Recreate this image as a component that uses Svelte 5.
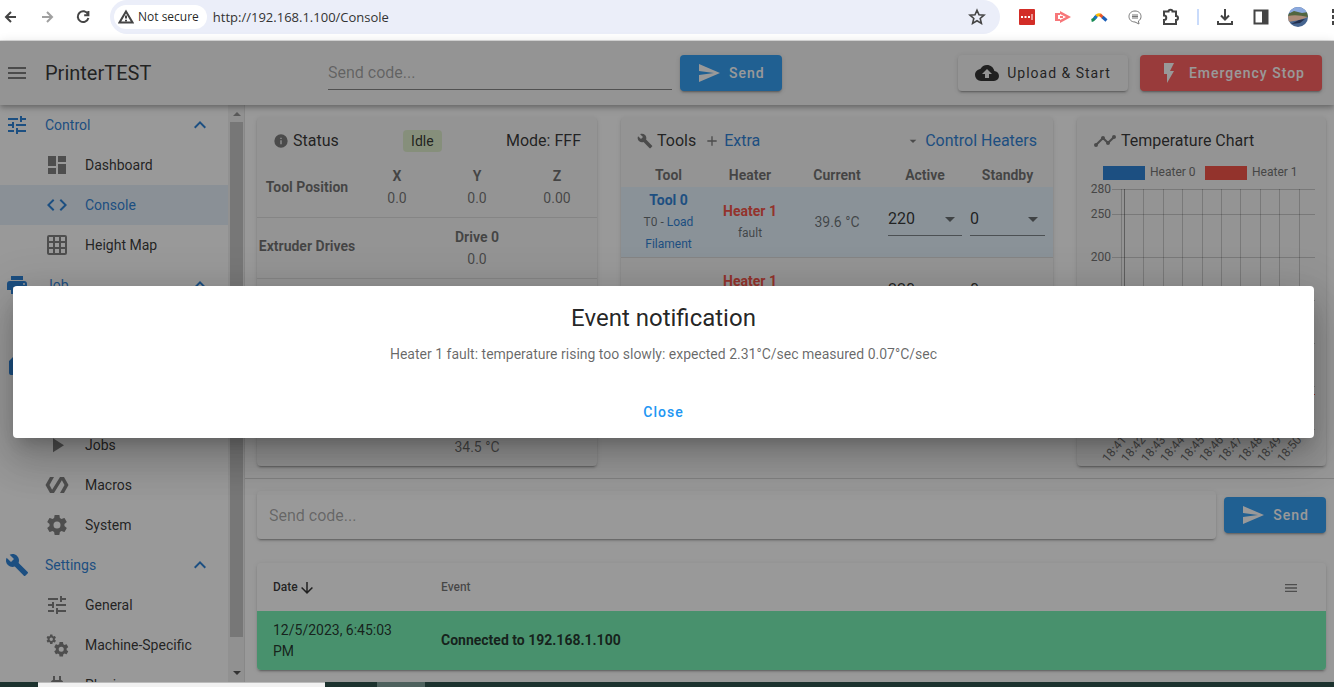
<script>
const icons = {
  menu: 'M3,6H21V8H3V6M3,11H21V13H3V11M3,16H21V18H3V16Z',
  tune: 'M3,17V19H9V17H3M3,5V7H13V5H3M13,21V19H21V17H13V15H11V21H13M7,9V11H3V13H7V15H9V9H7M21,13V11H11V13H21M15,9H17V7H21V5H17V3H15V9Z',
  dashboard: 'M13,3V9H21V3M13,21H21V11H13M3,21H11V15H3M3,13H11V3H3V13Z',
  code: 'M14.6,16.6L19.2,12L14.6,7.4L16,6L22,12L16,18L14.6,16.6M9.4,16.6L4.8,12L9.4,7.4L8,6L2,12L8,18L9.4,16.6Z',
  grid: 'M10,4V8H14V4H10M16,4V8H20V4H16M16,10V14H20V10H16M16,16V20H20V16H16M14,20V16H10V20H14M8,20V16H4V20H8M8,14V10H4V14H8M8,8V4H4V8H8M10,14H14V10H10V14M4,2H20A2,2 0 0,1 22,4V20A2,2 0 0,1 20,22H4C2.92,22 2,21.1 2,20V4A2,2 0 0,1 4,2Z',
  printer: 'M18,3H6V7H18M19,12A1,1 0 0,1 18,11A1,1 0 0,1 19,10A1,1 0 0,1 20,11A1,1 0 0,1 19,12M16,19H8V14H16M19,8H5A3,3 0 0,0 2,11V17H6V21H18V17H22V11A3,3 0 0,0 19,8Z',
  sd: 'M18,8H16V4H18M15,8H13V4H15M12,8H10V4H12M18,2H10L4,8V20A2,2 0 0,0 6,22H18A2,2 0 0,0 20,20V4A2,2 0 0,0 18,2Z',
  info: 'M13,9H11V7H13M13,17H11V11H13M12,2A10,10 0 0,0 2,12A10,10 0 0,0 12,22A10,10 0 0,0 22,12A10,10 0 0,0 12,2Z',
  play: 'M8,5.14V19.14L19,12.14L8,5.14Z',
  polymer: 'M19,4H15L7.1,16.63L4.5,12L9,4H5L0.5,12L5,20H9L16.89,7.37L19.5,12L15,20H19L23.5,12L19,4Z',
  cog: 'M12,15.5A3.5,3.5 0 0,1 8.5,12A3.5,3.5 0 0,1 12,8.5A3.5,3.5 0 0,1 15.5,12A3.5,3.5 0 0,1 12,15.5M19.43,12.97C19.47,12.65 19.5,12.33 19.5,12C19.5,11.67 19.47,11.34 19.43,11L21.54,9.37C21.73,9.22 21.78,8.95 21.66,8.73L19.66,5.27C19.54,5.05 19.27,4.96 19.05,5.05L16.56,6.05C16.04,5.66 15.5,5.32 14.87,5.07L14.5,2.42C14.46,2.18 14.25,2 14,2H10C9.75,2 9.54,2.18 9.5,2.42L9.13,5.07C8.5,5.32 7.96,5.66 7.44,6.05L4.95,5.05C4.73,4.96 4.46,5.05 4.34,5.27L2.34,8.73C2.21,8.95 2.27,9.22 2.46,9.37L4.57,11C4.53,11.34 4.5,11.67 4.5,12C4.5,12.33 4.53,12.65 4.57,12.97L2.46,14.63C2.27,14.78 2.21,15.05 2.34,15.27L4.34,18.73C4.46,18.95 4.73,19.03 4.95,18.95L7.44,17.94C7.96,18.34 8.5,18.68 9.13,18.93L9.5,21.58C9.54,21.82 9.75,22 10,22H14C14.25,22 14.46,21.82 14.5,21.58L14.87,18.93C15.5,18.67 16.04,18.34 16.56,17.94L19.05,18.95C19.27,19.03 19.54,18.95 19.66,18.73L21.66,15.27C21.78,15.05 21.73,14.78 21.54,14.63L19.43,12.97Z',
  wrench: 'M22.7,19L13.6,9.9C14.5,7.6 14,4.9 12.1,3C10.1,1 7.1,0.6 4.7,1.7L9,6L6,9L1.6,4.7C0.4,7.1 0.9,10.1 2.9,12.1C4.8,14 7.5,14.5 9.8,13.6L18.9,22.7C19.3,23.1 19.9,23.1 20.3,22.7L22.6,20.4C23.1,20 23.1,19.3 22.7,19Z',
  plug: 'M16,7V3H14V7H10V3H8V7H8C7,7 6,8 6,9V14.5L9.5,18V21H14.5V18L18,14.5V9C18,8 17,7 16,7Z',
  up: 'M7.41,15.41L12,10.83L16.59,15.41L18,14L12,8L6,14L7.41,15.41Z',
  send: 'M2,21L23,12L2,3V10L17,12L2,14V21Z',
  cloud: 'M14,13V17H10V13H7L12,8L17,13M19.35,10.03C18.67,6.59 15.64,4 12,4C9.11,4 6.6,5.64 5.35,8.03C2.34,8.36 0,10.9 0,14A6,6 0 0,0 6,20H19A5,5 0 0,0 24,15C24,12.36 21.95,10.22 19.35,10.03Z',
  flash: 'M7,2V13H10V22L17,10H13L17,2H7Z',
  plus: 'M19,13H13V19H11V13H5V11H11V5H13V11H19V13Z',
  down: 'M7,10L12,15L17,10H7Z',
  chart: 'M23,8C23,9.1 22.1,10 21,10C20.82,10 20.65,9.97 20.5,9.93L16.93,13.5C16.97,13.64 17,13.82 17,14C17,15.1 16.1,16 15,16C13.9,16 13,15.1 13,14C13,13.82 13.03,13.64 13.07,13.5L10.5,10.93C10.36,10.97 10.18,11 10,11C9.82,11 9.64,10.97 9.5,10.93L4.93,15.5C4.97,15.65 5,15.82 5,16A2,2 0 0,1 3,18A2,2 0 0,1 1,16C1,14.9 1.9,14 3,14C3.18,14 3.35,14.03 3.5,14.07L8.07,9.5C8.03,9.36 8,9.18 8,9C8,7.9 8.9,7 10,7C11.1,7 12,7.9 12,9C12,9.18 11.97,9.36 11.93,9.5L14.5,12.07C14.64,12.03 14.82,12 15,12C15.18,12 15.36,12.03 15.5,12.07L19.07,8.5C19.03,8.35 19,8.18 19,8A2,2 0 0,1 21,6A2,2 0 0,1 23,8Z',
  arrow: 'M11,4H13V16L18.5,10.5L19.92,11.92L12,19.84L4.08,11.92L5.5,10.5L11,16V4Z'
};

const menu = [
  { name: 'Control', icon: 'tune', pages: [
    { name: 'Dashboard', icon: 'dashboard' },
    { name: 'Console', icon: 'code' },
    { name: 'Height Map', icon: 'grid' }
  ] },
  { name: 'Job', icon: 'printer', pages: [
    { name: 'Status', icon: 'info' }
  ] },
  { name: 'Files', icon: 'sd', pages: [
    { name: 'Filaments', icon: 'polymer' },
    { name: 'Jobs', icon: 'play' },
    { name: 'Macros', icon: 'polymer' },
    { name: 'System', icon: 'cog' }
  ] },
  { name: 'Settings', icon: 'wrench', pages: [
    { name: 'General', icon: 'tune' },
    { name: 'Machine-Specific', icon: 'cogs' },
    { name: 'Plugins', icon: 'plug' }
  ] }
];

const axes = [
  { name: 'X', value: '0.0' },
  { name: 'Y', value: '0.0' },
  { name: 'Z', value: '0.00' }
];

const tools = [
  { number: 0, heaters: [{ name: 'Heater 1', state: 'fault', current: '39.6 °C' }] },
  { number: 1, heaters: [
    { name: 'Heater 1', state: 'fault', current: '39.6 °C' },
    { name: 'Heater 2', state: 'off', current: '34.5 °C' }
  ] }
];

const yTicks = [280, 250, 200, 150, 100, 50, 0];
const times = ['18:41', '18:42', '18:43', '18:44', '18:45', '18:46', '18:47', '18:48', '18:49', '18:50'];

const tempY = (t) => t === 280 ? 29 : Math.round(269 - t * 43 / 50);
const timeX = (i) => Math.round(47 + i * 19.4);

let active = $state('Console');
let open = $state(true);
</script>

{#snippet icon(name, size = 24)}
  <svg class="icon" width={size} height={size} viewBox="0 0 24 24" aria-hidden="true">
    {#if name === 'cogs'}
      <path d={icons.cog} transform="translate(.5 .5) scale(.48)"/>
      <path d={icons.cog} transform="translate(7.6 7.6) scale(.72)"/>
    {:else}
      <path d={icons[name]}/>
    {/if}
  </svg>
{/snippet}

<div class="window">
  <header class="browser">
    <button aria-label="Back"><svg width="16" height="16" viewBox="0 0 16 16"><path class="line" d="M13 8H3M8 3L3 8l5 5"/></svg></button>
    <button aria-label="Forward" class="off"><svg width="16" height="16" viewBox="0 0 16 16"><path class="line" d="M3 8h10M8 3l5 5l-5 5"/></svg></button>
    <button aria-label="Reload"><svg width="16" height="16" viewBox="0 0 16 16"><path class="line" d="M13 5.2A5.4 5.4 0 1 0 13.4 9M13.4 2v4.2H9.2"/></svg></button>
    <div class="address">
      <span class="secure">
        <svg width="16" height="16" viewBox="0 0 16 16"><path class="line" d="M8 2.5L14.5 13.5H1.5ZM8 6.5v3M8 10.8v1.4"/></svg>
        Not secure
      </span>
      <input aria-label="Address" value="http://192.168.1.100/Console">
      <button aria-label="Bookmark"><svg width="18" height="18" viewBox="0 0 18 18"><path class="line thin" d="M9 2.2l2 4.6l5 .4l-3.8 3.3l1.2 4.9L9 12.8l-4.4 2.6l1.2-4.9L2 7.2l5-.4Z"/></svg></button>
    </div>
    <div class="extensions">
      <svg width="18" height="18" viewBox="0 0 18 18"><rect x="1" y="1" width="16" height="16" rx="1" fill="#d32d27"/><path d="M3 8h2v2H3ZM6.500 8h2v2h-2ZM10 8h2v2h-2ZM13.500 6h1v6h-1Z" fill="#fff"/></svg>
      <svg width="18" height="18" viewBox="0 0 18 18"><path d="M1 5h5v2H4v4h2v2H1ZM6 3l11 6l-11 6v-3l6-3l-6-3ZM6 8h3v2H6Z" fill="#f7777a"/></svg>
      <svg width="18" height="18" viewBox="0 0 18 18" fill="none" stroke-width="3"><path d="M1.500 12.500Q4 12 6 8.500" stroke="#188a55"/><path d="M4.500 10.500L7 7.500" stroke="#1a73c8"/><path d="M6.500 8Q8 6 10.500 7" stroke="#fbbc04"/><path d="M10 6.700L13 9.500" stroke="#e8562a"/><path d="M12.500 9L16.500 12.500" stroke="#1b5fb8"/></svg>
      <svg width="18" height="18" viewBox="0 0 18 18"><path d="M9 3C5.500 3 3 5.300 3 8.500S5.500 14 9 14l4 2l-.6-3C14.200 12 15 10.500 15 8.500C15 5.300 12.500 3 9 3Z" fill="none" stroke="#777"/><path d="M6 7h6M6 8.500h6M6 10h6" stroke="#777"/></svg>
      <svg width="18" height="18" viewBox="0 0 18 18"><path class="line" d="M2 3.500h4.500a2 1.800 0 0 1 4 0H14v4.500a1.800 1.800 0 0 1 0 4V16H2v-4c3 0 3-4.500 0-4.500Z"/></svg>
      <span class="split"></span>
      <svg width="18" height="18" viewBox="0 0 18 18"><path class="line" d="M9 1v10M5 7.500l4 4l4-4M2 13v3h14v-3"/></svg>
      <svg width="18" height="18" viewBox="0 0 18 18"><path class="line" d="M2.500 2.500h13v13h-13Z"/><path d="M10 2h6v14h-6Z" fill="#444"/></svg>
      <svg width="20" height="20" viewBox="0 0 20 20">
        <clipPath id="face"><circle cx="10" cy="10" r="10"/></clipPath>
        <g clip-path="url(#face)"><path d="M0 0h20v20H0Z" fill="#466590"/><path d="M0 0h20v6H0Z" fill="#8ba9de"/><path d="M0 7l6-3l8 2l6-1v5H0Z" fill="#52653f"/><path d="M0 9q8-2 20 1l-8 3l-12 2Z" fill="#ad8b78"/><path d="M3 17l8-4l6-1l-5 4Z" fill="#222f4d"/></g>
      </svg>
    </div>
    <button aria-label="More" class="more"><svg width="4" height="18" viewBox="0 0 4 18"><path d="M0 1h4v4H0ZM0 7h4v4H0ZM0 13h4v4H0Z" fill="#444"/></svg></button>
  </header>

  <div class="app">
    <header class="bar">
      <div class="brand">
        <button class="plain" aria-label="Toggle menu">{@render icon('menu')}</button>
        <h1>PrinterTEST</h1>
      </div>
      <form class="code" onsubmit={(e) => e.preventDefault()}>
        <input aria-label="G-code" placeholder="Send code...">
        <button class="btn blue">{@render icon('send')}Send</button>
      </form>
      <div class="actions">
        <button class="btn">{@render icon('cloud')}Upload &amp; Start</button>
        <button class="btn red">{@render icon('flash')}Emergency Stop</button>
      </div>
    </header>

    <div class="body">
      <aside>
        <nav>
          {#each menu as group}
            <button class="group">
              {@render icon(group.icon)}
              <span>{group.name}</span>
              {@render icon('up')}
            </button>
            {#each group.pages as page}
              <a href="#{page.name}" class:active={active === page.name} onclick={() => active = page.name}>
                {@render icon(page.icon)}
                {page.name}
              </a>
            {/each}
          {/each}
        </nav>
        <div class="scroll" aria-hidden="true">
          <svg width="17" height="17" viewBox="0 0 17 17"><path d="M5 11l4-4l4 4Z" fill="#8a8a8a"/></svg>
          <span class="thumb"></span>
          <svg width="17" height="17" viewBox="0 0 17 17"><path d="M5 6l4 4l4-4Z" fill="#444"/></svg>
        </div>
      </aside>

      <main>
        <div class="cards">
          <section class="card">
            <h2>
              <span class="title">{@render icon('info', 16)}Status</span>
              <span class="badge">Idle</span>
              <span>Mode: FFF</span>
            </h2>
            <table class="status">
              <colgroup><col class="label"><col><col><col></colgroup>
              <tbody>
                <tr>
                  <th scope="row">Tool Position</th>
                  {#each axes as axis}
                    <td><strong>{axis.name}</strong><br>{axis.value}</td>
                  {/each}
                </tr>
                <tr>
                  <th scope="row">Extruder Drives</th>
                  <td colspan="3"><strong>Drive 0</strong><br>0.0</td>
                </tr>
                <tr>
                  <th scope="row">Speeds</th>
                  <td colspan="3"><strong>Requested Speed</strong><br>0 mm/s</td>
                </tr>
                <tr class="last">
                  <th scope="row">Sensors</th>
                  <td colspan="3"><strong>MCU Temperature</strong><br>34.5 °C</td>
                </tr>
              </tbody>
            </table>
          </section>

          <section class="card">
            <h2>
              <span class="title">{@render icon('wrench', 16)}Tools</span>
              <a class="extra" href="#extra">{@render icon('plus', 16)}Extra</a>
              <a class="heaters" href="#heaters">{@render icon('down', 16)}Control Heaters</a>
            </h2>
            <table class="tools">
              <colgroup><col class="tool"><col class="heater"><col class="current"><col class="temp"><col></colgroup>
              <thead>
                <tr><th>Tool</th><th>Heater</th><th>Current</th><th>Active</th><th>Standby</th></tr>
              </thead>
              <tbody>
                {#each tools as tool}
                  {#each tool.heaters as heater, i}
                    <tr class:selected={tool.number === 0}>
                      {#if i === 0}
                        <td rowspan={tool.heaters.length}>
                          <a href="#tool"><strong>Tool {tool.number}</strong></a>
                          <small>T{tool.number} - <a href="#filament">Load Filament</a></small>
                        </td>
                      {/if}
                      <td><strong class="fault">{heater.name}</strong><small>{heater.state}</small></td>
                      <td>{heater.current}</td>
                      <td>
                        <label class="pick">
                          <select aria-label="Active temperature"><option>220</option><option>0</option></select>
                          {@render icon('down')}
                        </label>
                      </td>
                      <td>
                        <label class="pick">
                          <select aria-label="Standby temperature"><option>0</option><option>220</option></select>
                          {@render icon('down')}
                        </label>
                      </td>
                    </tr>
                  {/each}
                {/each}
              </tbody>
            </table>
          </section>

          <section class="card">
            <h2><span class="title">{@render icon('chart')}Temperature Chart</span></h2>
            <svg class="plot" viewBox="0 0 249 305" role="img" aria-label="Heater temperatures">
              <rect x="26" y="5" width="42" height="14" fill="#1976d2"/>
              <text x="73" y="15">Heater 0</text>
              <rect x="128" y="5" width="42" height="14" fill="#f44336"/>
              <text x="175" y="15">Heater 1</text>
              {#each yTicks as t}
                <path class="rule" d="M35 {tempY(t) - .5}H238"/>
                <text x="34" y={tempY(t) + 3} text-anchor="end">{t}</text>
              {/each}
              <path class="rule" d="M44.500 28V268"/>
              <path class="heat" d="M227 233.500H238"/>
              {#each times as time, i}
                <path class="rule" class:first={i === 0} d="M{timeX(i) + .5} 28V273"/>
                <text text-anchor="end" transform="translate({timeX(i) + 3} 279) rotate(-50)">{time}</text>
              {/each}
            </svg>
          </section>
        </div>

        <hr>

        <form class="console" onsubmit={(e) => e.preventDefault()}>
          <input class="card" aria-label="Console code" placeholder="Send code...">
          <button class="btn blue">{@render icon('send')}Send</button>
        </form>

        <table class="card events">
          <colgroup><col class="date"><col><col class="options"></colgroup>
          <thead>
            <tr>
              <th class="sorted">Date{@render icon('arrow', 18)}</th>
              <th>Event</th>
              <th><button class="plain" aria-label="Options">{@render icon('menu', 16)}</button></th>
            </tr>
          </thead>
          <tbody>
            <tr>
              <td>12/5/2023, 6:45:03 PM</td>
              <td colspan="2"><strong>Connected to 192.168.1.100</strong></td>
            </tr>
          </tbody>
        </table>
      </main>
    </div>

    {#if open}
      <div class="overlay">
        <div class="dialog" role="dialog" aria-modal="true" aria-labelledby="dialog-title">
          <h2 id="dialog-title">Event notification</h2>
          <p>Heater 1 fault: temperature rising too slowly: expected 2.31°C/sec measured 0.07°C/sec</p>
          <button class="close" onclick={() => open = false}>Close</button>
        </div>
      </div>
    {/if}
  </div>

  <footer class="taskbar"><span class="hint"></span><span class="task"></span></footer>
</div>

<style>
:global(body) {
  margin: 0;
}

* {
  box-sizing: border-box;
}

.window {
  height: 100vh;
  display: flex;
  flex-direction: column;
  overflow: hidden;
  font: 14px/22px Roboto, sans-serif;
  color: rgba(0, 0, 0, .87);
  background: #fff;
}

button,
input,
select {
  font: inherit;
  color: inherit;
  border: none;
  background: none;
  padding: 0;
  margin: 0;
}

button {
  cursor: pointer;
}

svg {
  display: block;
  flex: none;
}

a {
  color: #1976d2;
  text-decoration: none;
}

.icon {
  fill: currentColor;
}

/* browser chrome */
.browser {
  flex: none;
  height: 41px;
  padding: 0 0 6px 3px;
  display: flex;
  align-items: center;
  gap: 20px;
  border-bottom: 1px solid #ddd;
  overflow: hidden;
}

.line {
  fill: none;
  stroke: #444;
  stroke-width: 2;
}

.thin {
  stroke-width: 1.6;
}

.off {
  opacity: .5;
}

.address {
  flex: 1;
  height: 34px;
  margin-left: -1px;
  padding: 0 14px 0 4px;
  display: flex;
  align-items: center;
  gap: 6px;
  background: #ebeef9;
  border-radius: 17px;
}

.address input {
  flex: 1;
  font: 13px/20px "Open Sans", sans-serif;
  color: #333;
}

.secure {
  height: 24px;
  padding: 0 8px 0 4px;
  display: flex;
  align-items: center;
  gap: 4px;
  border-radius: 12px;
  background: #fff;
  font: 500 12px/20px "Open Sans", sans-serif;
}

.extensions {
  display: flex;
  align-items: center;
  gap: 18px;
  margin: 0 4px 0 -2px;
}

.split {
  width: 2px;
  height: 16px;
  margin: 0 -1px;
  background: #c9dbfb;
}

.more {
  width: 2px;
  overflow: hidden;
}

/* application */
.app {
  flex: 1;
  min-height: 0;
  display: flex;
  flex-direction: column;
  position: relative;
}

.bar {
  height: 64px;
  padding: 0 12px 0 5px;
  display: flex;
  align-items: center;
  justify-content: space-between;
  background: #f5f5f5;
  box-shadow: 0 2px 4px -1px rgba(0, 0, 0, .2), 0 4px 5px rgba(0, 0, 0, .14), 0 1px 10px rgba(0, 0, 0, .12);
  z-index: 1;
}

.brand,
.actions,
.code {
  display: flex;
  align-items: center;
}

.brand {
  gap: 16px;
}

.actions {
  gap: 12px;
}

.code {
  gap: 8px;
}

.code input {
  width: 344px;
  height: 34px;
  font-size: 16px;
  border-bottom: 1px solid rgba(0, 0, 0, .5);
}

::placeholder {
  color: rgba(0, 0, 0, .38);
  opacity: 1;
}

h1 {
  margin: 0;
  font-size: 20px;
  line-height: 28px;
  font-weight: 400;
}

.plain {
  color: rgba(0, 0, 0, .54);
}

.btn {
  height: 36px;
  padding: 0 17px;
  display: flex;
  align-items: center;
  gap: 8px;
  border-radius: 4px;
  letter-spacing: 1px;
  background: #f5f5f5;
  box-shadow: 0 3px 1px -2px rgba(0, 0, 0, .2), 0 2px 2px rgba(0, 0, 0, .14), 0 1px 5px rgba(0, 0, 0, .12);
}

.blue,
.red {
  color: #fff;
  font-weight: 500;
}

.blue {
  background: #2196f3;
}

.red {
  background: #ff5252;
}

.body {
  flex: 1;
  min-height: 0;
  display: flex;
}

aside {
  flex: none;
  width: 245px;
  display: flex;
  border-right: 1px solid #e0e0e0;
}

nav {
  flex: 1;
  overflow: hidden;
}

nav a,
.group {
  width: 100%;
  height: 40px;
  display: flex;
  align-items: center;
  gap: 16px;
}

nav a {
  padding-left: 45px;
  color: inherit;
}

nav a .icon {
  color: rgba(0, 0, 0, .54);
}

nav a.active {
  background: #e3effa;
}

nav a.active,
nav a.active .icon {
  color: #1976d2;
}

.group {
  padding: 0 16px 0 5px;
  color: #1976d2;
}

.group span {
  flex: 1;
  text-align: left;
}

.scroll {
  width: 16px;
  display: flex;
  flex-direction: column;
  align-items: center;
  background: #f1f1f1;
}

.thumb {
  width: 13px;
  flex: 1;
  margin-bottom: 28px;
  background: #c1c1c1;
}

main {
  flex: 1;
  min-width: 0;
  overflow: hidden;
  display: flex;
  flex-direction: column;
}

.cards {
  padding: 12px 8px 12px 12px;
  display: grid;
  grid-template-columns: 340fr 432fr 249fr;
  gap: 24px;
  align-items: start;
}

.card {
  background: #f5f5f5;
  border-radius: 4px;
  box-shadow: 0 3px 1px -2px rgba(0, 0, 0, .2), 0 2px 2px rgba(0, 0, 0, .14), 0 1px 5px rgba(0, 0, 0, .12);
}

.card h2 {
  margin: 0;
  padding: 12px 16px 8px;
  display: flex;
  align-items: center;
  justify-content: space-between;
  font-size: 16px;
  line-height: 24px;
  font-weight: 400;
}

.title {
  display: flex;
  align-items: center;
  gap: 4px;
}

.card h2 .icon {
  color: rgba(0, 0, 0, .54);
}

.badge {
  padding: 0 8px;
  border-radius: 4px;
  font-size: 14px;
  line-height: 22px;
  background: #dcedc8;
}

.extra,
.heaters {
  display: flex;
  align-items: center;
  gap: 4px;
}

.extra {
  margin: 0 auto 0 8px;
}

table {
  width: 100%;
  table-layout: fixed;
  border-collapse: collapse;
}

.status,
.tools {
  color: rgba(0, 0, 0, .6);
  text-align: center;
}

th,
td {
  padding: 0;
}

th,
strong {
  font-weight: 700;
}

.label {
  width: 100px;
}

.status th {
  padding-bottom: 4px;
  white-space: nowrap;
}

.status td {
  height: 56px;
  padding: 4px 0 8px;
}

.status tr + tr td {
  height: 61px;
  padding: 8px 0;
}

.status tr + tr {
  border-top: 1px solid #dadada;
}

.status tr.last td {
  height: 126px;
  vertical-align: bottom;
}

.tool {
  width: 89px;
}

.heater {
  width: 80px;
}

.current {
  width: 94px;
}

.temp {
  width: 82px;
}

.tools td:first-child[rowspan],
.tools th:first-child {
  padding-left: 6px;
}

.tools td:last-child,
.tools th:last-child {
  padding-right: 4px;
}

.tools thead th {
  height: 26px;
  padding-top: 2px;
}

.tools tbody tr {
  border-bottom: 1px solid #dadada;
}

.tools tbody td {
  height: 70px;
}

.selected {
  background: #e3f2fd;
}

small {
  display: block;
  font-size: 12px;
}

.fault {
  color: #f44336;
}

.pick {
  margin: 0 4px 4px;
  display: grid;
  grid-template-columns: 1fr 24px;
  align-items: center;
  border-bottom: 1px solid rgba(0, 0, 0, .5);
}

.pick select {
  grid-area: 1 / 1 / 2 / 3;
  height: 32px;
  appearance: none;
  font-size: 16px;
  color: rgba(0, 0, 0, .87);
}

.pick .icon {
  grid-area: 1 / 2;
  pointer-events: none;
}

.plot {
  width: 100%;
  font: 12px Roboto, sans-serif;
  fill: #666;
}

.rule {
  stroke: rgba(0, 0, 0, .2);
}

.first {
  stroke: rgba(0, 0, 0, .4);
}

.heat {
  stroke: #f44336;
}

hr {
  width: 100%;
  margin: 0;
  border: none;
  border-top: 1px solid #d4d4d4;
}

.console {
  padding: 12px 8px 24px 12px;
  display: flex;
  align-items: center;
  gap: 8px;
}

.console input {
  flex: 1;
  height: 48px;
  padding: 0 12px;
  font-size: 16px;
  background: #fff;
}

.events {
  width: auto;
  margin: 0 8px 0 12px;
  overflow: hidden;
  text-align: left;
  background: #fff;
}

.date {
  width: 168px;
}

.options {
  width: 59px;
}

.events th {
  height: 48px;
  padding: 0 16px;
  font-size: 12px;
  font-weight: 500;
  color: rgba(0, 0, 0, .6);
}

.events .sorted {
  color: inherit;
}

.events th .icon {
  display: inline-block;
  vertical-align: middle;
}

.events td {
  height: 59px;
  padding: 0 16px;
  line-height: 21px;
  background: #69f0ae;
}

/* notification */
.overlay {
  position: absolute;
  inset: 0;
  z-index: 2;
  padding: 0 20px 0 13px;
  display: grid;
  align-items: center;
  background: rgba(33, 33, 33, .46);
}

.dialog {
  padding: 16px 24px 8px;
  display: flex;
  flex-direction: column;
  align-items: center;
  background: #fff;
  border-radius: 4px;
  box-shadow: 0 11px 15px -7px rgba(0, 0, 0, .2), 0 24px 38px 3px rgba(0, 0, 0, .14), 0 9px 46px 8px rgba(0, 0, 0, .12);
}

.dialog h2 {
  margin: 0 0 9px;
  font-size: 24px;
  line-height: 32px;
  font-weight: 400;
}

.dialog p {
  margin: 0 0 29px;
  color: rgba(0, 0, 0, .6);
}

.close {
  height: 36px;
  padding: 0 8px;
  color: #2196f3;
  font-weight: 500;
  letter-spacing: 1px;
}

/* desktop strip under the page */
.taskbar {
  flex: none;
  height: 5px;
  padding-left: 38px;
  display: flex;
  gap: 52px;
  background: #1c322e;
}

.hint {
  width: 287px;
  background: #f1f1f1;
  border-top: 1px solid #bbb;
}

.task {
  width: 48px;
  background: #4d615d;
}
</style>
